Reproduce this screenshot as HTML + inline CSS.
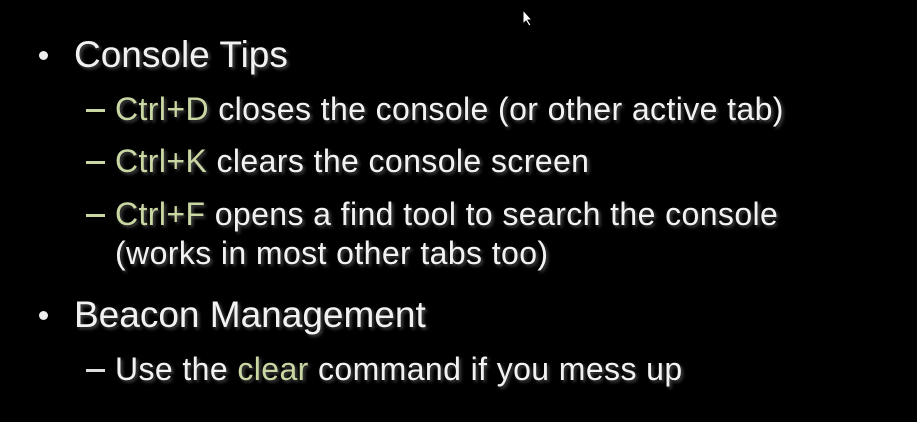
<!DOCTYPE html>
<html><head><style>
html,body{margin:0;padding:0;background:#000;}
body{width:917px;height:422px;position:relative;overflow:hidden;font-family:"Liberation Sans",sans-serif;color:#f2f2f2;}
.t{position:absolute;white-space:nowrap;line-height:1;text-shadow:2px 2px 3px rgba(120,120,120,0.6);}
.l1{font-size:37px;letter-spacing:0px;left:74px;}
.l2{font-size:32px;letter-spacing:0.4px;left:115px;}
.g{color:#c9d7a3;}
.b{position:absolute;width:9px;height:9px;border-radius:50%;background:#eee;left:39px;}
.d{position:absolute;height:3px;width:19px;background:#c9d7a3;left:86px;}
.d2{background:#ddd;}
</style></head><body>
<svg style="position:absolute;left:522px;top:9px" width="12" height="18" viewBox="0 0 12 18"><path d="M1 1 L1 15 L4 12 L7 17 L9 16 L6 11 L10 11 Z" fill="#fff" stroke="#000" stroke-width="1"/></svg>
<div class="b" style="top:51px"></div>
<div class="t l1" style="top:36px">Console Tips</div>
<div class="d" style="top:109px"></div>
<div class="t l2" style="top:93px"><span class="g">Ctrl+D</span> closes the console (or other active tab)</div>
<div class="d" style="top:161px"></div>
<div class="t l2" style="top:145px"><span class="g">Ctrl+K</span> clears the console screen</div>
<div class="d" style="top:214px"></div>
<div class="t l2" style="top:198px"><span class="g">Ctrl+F</span> opens a find tool to search the console</div>
<div class="t l2" style="top:237px">(works in most other tabs too)</div>
<div class="b" style="top:311px"></div>
<div class="t l1" style="top:296px">Beacon Management</div>
<div class="d d2" style="top:369px"></div>
<div class="t l2" style="top:353px">Use the <span class="g">clear</span> command if you mess up</div>
</body></html>
